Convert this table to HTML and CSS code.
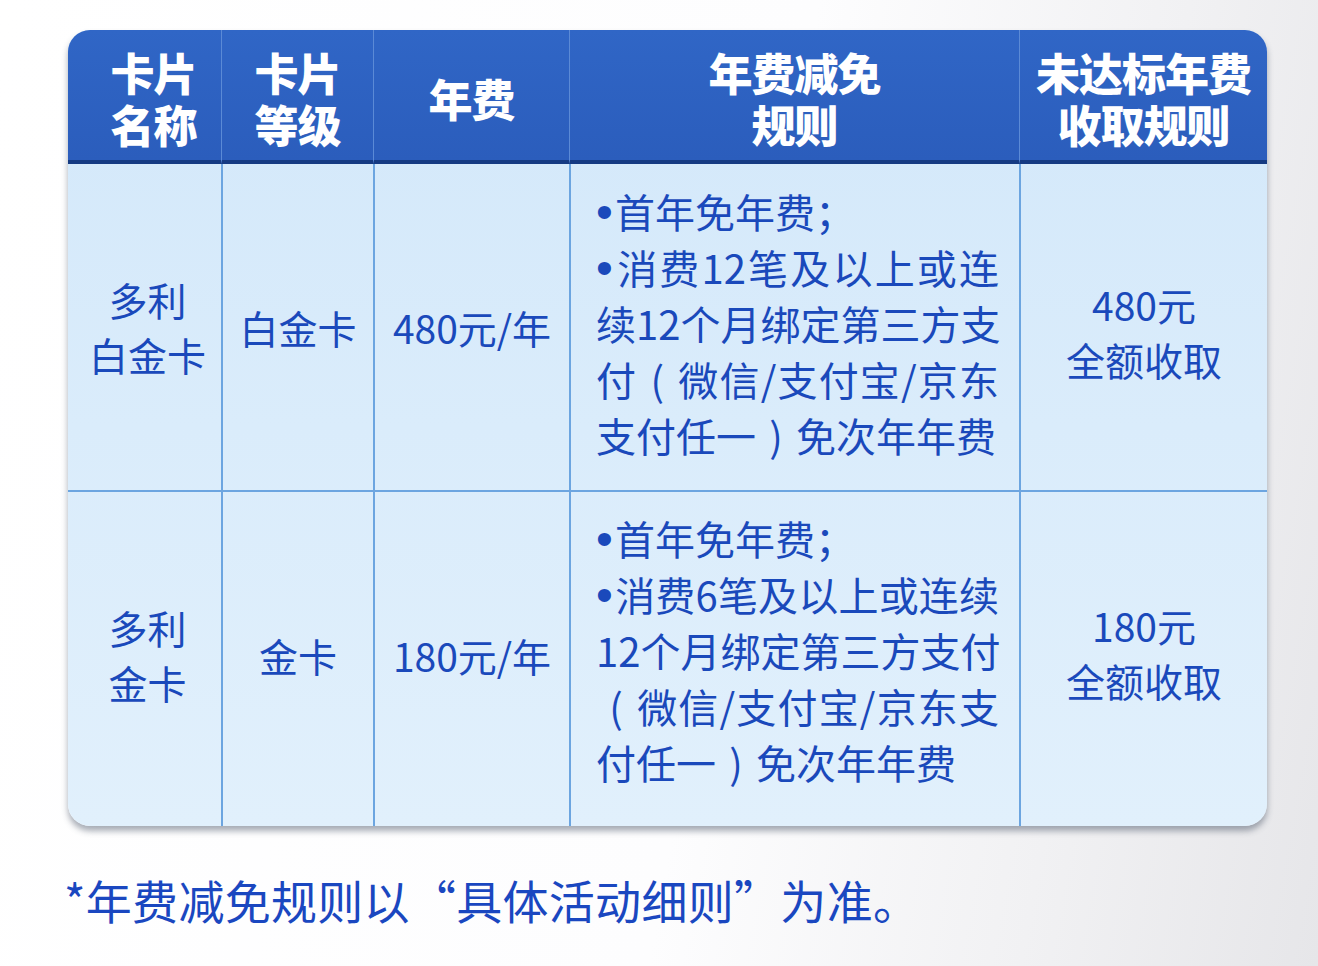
FILE: index.html
```html
<!DOCTYPE html>
<html lang="zh-CN">
<head>
<meta charset="utf-8">
<title>卡片年费</title>
<link rel="stylesheet" href="styles.css">
</head>
<body>
<div class="page">
  <div class="fee-table">
    <div class="th first">卡片<br>名称</div>
    <div class="th">卡片<br>等级</div>
    <div class="th">年费</div>
    <div class="th">年费减免<br>规则</div>
    <div class="th">未达标年费<br>收取规则</div>

    <div class="td first">多利<br>白金卡</div>
    <div class="td">白金卡</div>
    <div class="td">480元/年</div>
    <div class="td rule">
      <div class="lines">
        <div class="ln"><span class="dot">•</span>首年免年费；</div>
        <div class="ln j"><span class="dot">•</span>消费12笔及以上或连</div>
        <div class="ln j">续12个月绑定第三方支</div>
        <div class="ln j">付<span class="par">(</span>微信/支付宝/京东</div>
        <div class="ln">支付任一<span class="par">)</span>免次年年费</div>
      </div>
    </div>
    <div class="td charge">480元<br>全额收取</div>

    <div class="td first row2">多利<br>金卡</div>
    <div class="td row2">金卡</div>
    <div class="td row2">180元/年</div>
    <div class="td row2 rule">
      <div class="lines">
        <div class="ln"><span class="dot">•</span>首年免年费；</div>
        <div class="ln j"><span class="dot">•</span>消费6笔及以上或连续</div>
        <div class="ln j">12个月绑定第三方支付</div>
        <div class="ln j"><span class="par">(</span>微信/支付宝/京东支</div>
        <div class="ln">付任一<span class="par">)</span>免次年年费</div>
      </div>
    </div>
    <div class="td row2 charge">180元<br>全额收取</div>
  </div>
  <p class="note">*年费减免规则以<span class="q">“</span>具体活动细则<span class="q">”</span>为准。</p>
</div>
</body>
</html>
```

FILE: styles.css
```css
html, body {
  margin: 0;
  padding: 0;
}
body {
  width: 1318px;
  height: 966px;
  overflow: hidden;
  background: linear-gradient(100deg, #ffffff 0%, #fdfdfe 55%, #f1f1f3 80%, #e6e6e9 100%);
  font-family: "Noto Sans CJK SC", "Noto Sans", sans-serif;
}
.page {
  padding: 30px 0 0 68px;
}
.fee-table {
  width: 1199px;
  display: grid;
  grid-template-columns: 153px 152px 196px 450px 248px;
  grid-template-rows: 134px 326px 336px;
  border-radius: 22px;
  overflow: hidden;
  box-shadow: 0 5px 6px rgba(60, 70, 90, 0.45);
  background: linear-gradient(180deg, #d3e8fa 0%, #e1f0fc 100%);
}
.th {
  box-sizing: border-box;
  display: flex;
  align-items: center;
  justify-content: center;
  text-align: center;
  padding-top: 6px;
  background: linear-gradient(180deg, #3066c6 0%, #2b5dbc 100%);
  color: #ffffff;
  font-size: 44px;
  font-weight: 900;
  line-height: 52px;
  letter-spacing: -1px;
  border-left: 1px solid #5b8ad6;
  border-bottom: 4px solid #153a82;
}
.th.first {
  border-left: none;
  padding-left: 18px;
}

.td {
  box-sizing: border-box;
  display: flex;
  align-items: center;
  justify-content: center;
  text-align: center;
  color: #1a49bb;
  font-size: 39px;
  line-height: 55px;
  border-left: 2px solid #6ca5e0;
}
.td.first {
  border-left: none;
  padding-left: 6px;
}
.td.row2 {
  border-top: 2px solid #6ca5e0;
  padding-bottom: 8px;
}

.td.rule {
  justify-content: flex-start;
  text-align: left;
  padding-left: 25px;
  padding-bottom: 8px;
  font-size: 40px;
  line-height: 56px;
}
.td.row2.rule {
  padding-bottom: 18px;
}
.lines {
  width: 403px;
}
.ln {
  white-space: nowrap;
}
.ln.j {
  text-align: justify;
  text-align-last: justify;
}
.td.charge {
  padding-top: 10px;
}
.td.row2.charge {
  padding-top: 0;
  padding-bottom: 12px;
}
.dot {
  font-family: "Liberation Sans", sans-serif;
  font-size: 48px;
  display: inline-block;
  width: 19px;
  line-height: 40px;
}
.par {
  display: inline-block;
  width: 40px;
  text-align: center;
  text-align-last: center;
}
.q {
  font-family: "Noto Sans CJK TC", "Noto Sans CJK SC", sans-serif;
}
.note {
  margin: 45px 0 0 -4px;
  color: #1a47c0;
  font-size: 46px;
  line-height: 56px;
  letter-spacing: 0.3px;
}
```
